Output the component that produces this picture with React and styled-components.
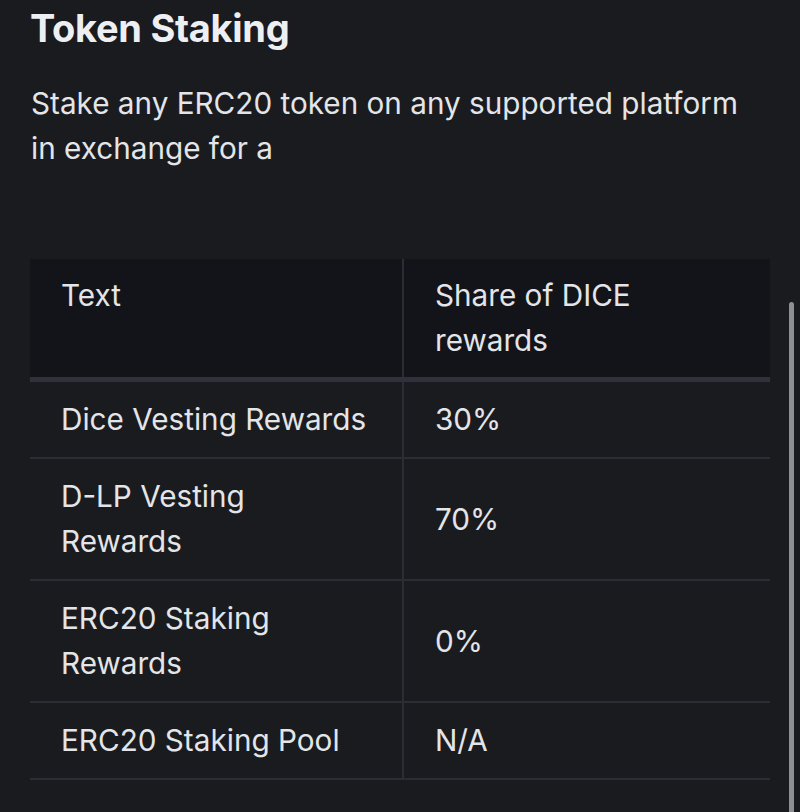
import React from "react";
import styled, { createGlobalStyle } from "styled-components";

const Global = createGlobalStyle`
  html, body { margin: 0; padding: 0; background: #191b1f; }
  body { font-family: Inter, "Noto Sans", sans-serif; -webkit-font-smoothing: antialiased; }
`;

const Page = styled.div`
  position: relative;
  width: 800px;
  height: 812px;
  overflow: hidden;
  background: #191b1f;
  box-sizing: border-box;
  padding: 2px 30px 0 30px;
  color: #e4e5e9;
`;

const Title = styled.h1`
  margin: 0 0 0 0;
  font-size: 38px;
  font-weight: 700;
  line-height: 52px;
  color: #eeeff2;
  letter-spacing: -0.3px;
`;

const Lead = styled.p`
  margin: 27px 0 0 1px;
  font-size: 29.7px;
  line-height: 45px;
  font-weight: 400;
  color: #e4e5e9;
`;

const Table = styled.table`
  margin-top: 88px;
  width: 740px;
  border-collapse: collapse;
  table-layout: fixed;
`;

const HeadRow = styled.tr`
  background: #131419;
  border-bottom: 5px solid #2f313b;
`;

const Row = styled.tr`
  border-bottom: 2px solid #2a2d33;
`;

const Cell = styled.td`
  padding: ${(p) => (p.$head ? "14px 34px 14px 31px" : "15px 34px 15px 31px")};
  font-size: 29.7px;
  line-height: 45px;
  font-weight: 400;
  text-align: left;
  vertical-align: ${(p) => (p.$head ? "top" : "middle")};
  color: #e4e5e9;
  & + & {
    border-left: 2px solid #2a2d33;
  }
`;

const Scrollbar = styled.div`
  position: absolute;
  right: 6px;
  top: 302px;
  width: 5px;
  height: 520px;
  border-radius: 3px;
  background: #8e8f92;
`;

const rows = [
  ["Dice Vesting Rewards", "30%"],
  ["D-LP Vesting Rewards", "70%"],
  ["ERC20 Staking Rewards", "0%"],
  ["ERC20 Staking Pool", "N/A"],
];

export default function App() {
  return (
    <>
      <Global />
      <Page>
        <Title>Token Staking</Title>
        <Lead>
          Stake any ERC20 token on any supported platform
          <br />
          in exchange for a
        </Lead>
        <Table>
          <colgroup>
            <col style={{ width: "373px" }} />
            <col style={{ width: "367px" }} />
          </colgroup>
          <thead>
            <HeadRow>
              <Cell as="th" $head>Text</Cell>
              <Cell as="th" $head>Share of DICE rewards</Cell>
            </HeadRow>
          </thead>
          <tbody>
            {rows.map(([a, b]) => (
              <Row key={a}>
                <Cell>{a}</Cell>
                <Cell>{b}</Cell>
              </Row>
            ))}
          </tbody>
        </Table>
        <Scrollbar />
      </Page>
    </>
  );
}
